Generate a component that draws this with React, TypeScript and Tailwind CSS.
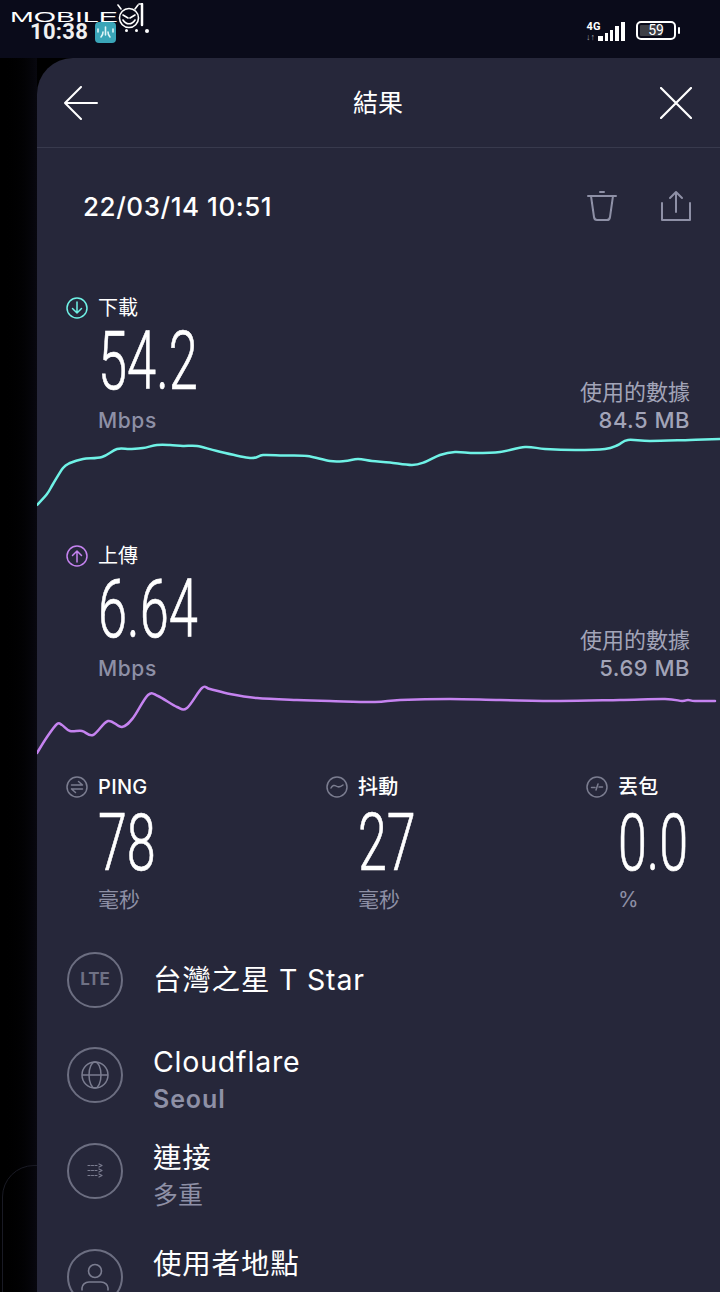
import { ReactNode } from "react";

const gotham = "font-['Inter','Noto_Sans_CJK_TC',sans-serif]";
const digits = "font-['Roboto',sans-serif]";

const downloadPoints = [
  [0, 68], [10, 57], [16, 47], [26, 31], [33, 26], [46, 22], [65, 20], [80, 12], [93, 12], [106, 11],
  [120, 8], [133, 8], [146, 9], [160, 9], [180, 14], [213, 21], [226, 18], [246, 18.5], [270, 19], [293, 24],
  [308, 24], [321, 22], [335, 24], [353, 25.5], [375, 28], [388, 25], [403, 18], [418, 15], [438, 16], [463, 15],
  [488, 10], [508, 12], [538, 13], [568, 12], [581, 8], [591, 3], [613, 4], [653, 3], [683, 2],
];

const uploadPoints = [
  [0, 67], [10, 51], [20, 38], [25, 39], [33, 45], [45, 45], [56, 49], [71, 35], [85, 41], [96, 32],
  [111, 9], [121, 10], [140, 21], [150, 22], [165, 2], [173, 3], [193, 8], [220, 12], [260, 14], [293, 15],
  [338, 16], [363, 14], [413, 13], [463, 14], [523, 15], [583, 14], [628, 13], [645, 15], [651, 14], [658, 15], [678, 15],
];

// 점들을 부드러운 곡선으로 연결
function smoothPath(pts: number[][]) {
  let d = `M${pts[0][0]} ${pts[0][1]}`;
  for (let i = 0; i < pts.length - 1; i++) {
    const p0 = pts[i - 1] ?? pts[i];
    const p1 = pts[i];
    const p2 = pts[i + 1];
    const p3 = pts[i + 2] ?? p2;
    const c1x = p1[0] + (p2[0] - p0[0]) / 6;
    const c1y = p1[1] + (p2[1] - p0[1]) / 6;
    const c2x = p2[0] - (p3[0] - p1[0]) / 6;
    const c2y = p2[1] - (p3[1] - p1[1]) / 6;
    d += ` C${c1x.toFixed(1)} ${c1y.toFixed(1)} ${c2x.toFixed(1)} ${c2y.toFixed(1)} ${p2[0]} ${p2[1]}`;
  }
  return d;
}

function CircleIcon({ color, children }: { color: string; children: ReactNode }) {
  return (
    <svg width="22" height="22" viewBox="0 0 22 22" fill="none" stroke={color} strokeWidth="1.5" strokeLinecap="round" strokeLinejoin="round">
      <circle cx="11" cy="11" r="10" />
      {children}
    </svg>
  );
}

function SpeedBlock({
  icon,
  label,
  value,
  used,
  points,
  color,
  viewBox,
}: {
  icon: ReactNode;
  label: string;
  value: string;
  used: string;
  points: number[][];
  color: string;
  viewBox: string;
}) {
  return (
    <section className="flex flex-col">
      <div className="flex items-center gap-[10px] pl-[29px] h-[24px]">
        {icon}
        <span className={`${gotham} text-[20px] leading-[24px] text-white`}>{label}</span>
      </div>
      <div className="flex items-end justify-between pl-[61px] pr-[30px]">
        <div className="flex flex-col">
          <div className={`${digits} h-[82px] text-[82px] leading-[82px] font-light [-webkit-text-stroke:0.7px_white] text-white origin-left scale-x-[0.64]`}>{value}</div>
          <div className={`${gotham} mt-[6px] text-[21px] leading-[26px] tracking-[0.6px] font-medium text-[#8e90a6]`}>Mbps</div>
        </div>
        <div className={`${gotham} flex flex-col items-end text-[22px] leading-[28px] text-[#a2a4b8]`}>
          <span>使用的數據</span>
          <span className="font-medium tracking-[0.5px]">{used}</span>
        </div>
      </div>
      <svg className="block mt-[3px]" width="683" height="72" viewBox={viewBox} fill="none">
        <path d={smoothPath(points)} stroke={color} strokeWidth="2.5" strokeLinejoin="round" strokeLinecap="round" />
      </svg>
    </section>
  );
}

function Stat({ icon, label, value, unit }: { icon: ReactNode; label: string; value: string; unit: string }) {
  return (
    <div className="flex flex-col">
      <div className="flex items-center gap-[10px] h-[24px]">
        {icon}
        <span className={`${gotham} text-[20px] leading-[24px] tracking-[0.3px] font-medium text-white`}>{label}</span>
      </div>
      <div className={`${digits} ml-[32px] mt-[5px] h-[78px] text-[80px] leading-[78px] font-light [-webkit-text-stroke:0.7px_white] text-white origin-left scale-x-[0.65]`}>{value}</div>
      <div className={`${gotham} ml-[32px] mt-[4px] text-[21px] leading-[28px] text-[#8e90a6]`}>{unit}</div>
    </div>
  );
}

function InfoRow({
  icon,
  title,
  sub,
  subClass = "font-semibold tracking-[0.9px]",
  className = "",
}: {
  icon: ReactNode;
  title: string;
  sub?: string;
  subClass?: string;
  className?: string;
}) {
  return (
    <div className={`flex items-center gap-[30px] h-[95.5px] shrink-0 ${className}`}>
      <div className="flex items-center justify-center w-[56px] h-[56px] rounded-full border-2 border-[#6c6e81] shrink-0">{icon}</div>
      <div className={`flex flex-col ${sub !== undefined ? "pt-[12px]" : ""}`}>
        <span className={`${gotham} text-[28.5px] leading-[36px] tracking-[0.8px] text-white`}>{title}</span>
        {sub !== undefined && <span className={`${gotham} h-[38px] text-[25px] leading-[38px] text-[#8e90a6] ${subClass}`}>{sub}</span>}
      </div>
    </div>
  );
}

function StatusBar() {
  return (
    <div className="relative flex items-center justify-between h-[58px] shrink-0 bg-[#0a0b1a] pl-[30px] pr-[40px]">
      <div className="flex items-center gap-[7px] mt-[6px]">
        <span className="font-['Roboto',sans-serif] text-[22px] leading-[26px] tracking-[0.3px] font-bold text-[#f0f0f0]">10:38</span>
        <div className="flex items-center justify-center w-[21px] h-[21px] rounded-[4px] bg-[#3aa5b8]">
          <svg width="17" height="13" viewBox="0 0 17 13" fill="none" stroke="#dff4f7" strokeWidth="1.6" strokeLinecap="round">
            <path d="M1 3v3M16 3v3M8.5 1v8M6 6c0 3-1 4-2 5M11 6c0 3 1 4 2 5" />
          </svg>
        </div>
        <div className="flex gap-[7px] ml-[2px] mt-[-2px]">
          <span className="w-[3px] h-[3px] rounded-full bg-white" />
          <span className="w-[3px] h-[3px] rounded-full bg-white" />
          <span className="w-[4px] h-[4px] rounded-full bg-white" />
        </div>
      </div>

      {/* 워터마크 */}
      <div className="absolute left-[10px] top-[3px] flex items-start">
        <span className="font-['Liberation_Sans',sans-serif] mt-[2px] text-[15px] leading-[24px] w-[107px] text-white origin-left scale-x-[1.9]">MOBILE</span>
        <svg width="28" height="30" viewBox="0 0 28 30" fill="none" stroke="#fff" strokeWidth="1.6" strokeLinecap="round">
          <circle cx="12" cy="15" r="9.5" />
          <path d="M4 6 1 2M18 6l3-4M6 12l5 3M18 12l-5 3M6 17c3 5 9 5 12 0" />
          <path d="M25 1v21" strokeWidth="2.5" />
          <path d="M22 1h3" />
        </svg>
      </div>

      <div className="flex items-center gap-[11px] mt-[3px]">
        <div className="flex items-end gap-[1px]">
          <div className="flex flex-col items-center mr-[-4px] mb-[-1px]">
            <span className="font-['Roboto',sans-serif] text-[11px] leading-[12px] font-bold text-white">4G</span>
            <span className="font-['Roboto',sans-serif] text-[9px] leading-[9px] mr-[6px] text-[#a0a0a6]">↓↑</span>
          </div>
          <div className="flex items-end gap-[2px] h-[19px]">
            <span className="w-[5px] h-[5px] bg-white" />
            <span className="w-[3px] h-[8px] bg-white" />
            <span className="w-[3px] h-[11px] bg-white" />
            <span className="w-[4px] h-[15px] bg-white" />
            <span className="w-[4px] h-[19px] bg-white" />
          </div>
        </div>
        <div className="flex items-center gap-[2px]">
          <div className="flex w-[40px] h-[19px] rounded-[5px] border-2 border-white p-[2px] relative">
            <div className="w-[22px] bg-[#3d3e46] rounded-[1px]" />
            <span className="absolute inset-0 flex items-center justify-center font-['Roboto',sans-serif] text-[14px] text-white">59</span>
          </div>
          <span className="w-[2px] h-[7px] bg-white rounded-[1px]" />
        </div>
      </div>
    </div>
  );
}

export default function App() {
  return (
    <div className="flex flex-col w-[720px] h-[1292px] overflow-hidden bg-black">
      <StatusBar />
      <div className="flex flex-1 min-h-0">
        <div className="relative w-[37px] shrink-0 bg-gradient-to-r from-black to-[#08080f]">
          <div className="absolute left-[2px] top-[1107px] w-[60px] h-[200px] rounded-tl-[32px] border border-[#191a24]" />
        </div>
        <main className="relative flex flex-col flex-1 min-w-0 overflow-hidden rounded-tl-[36px] bg-[#26273a]">
          <header className="flex items-center justify-between h-[90px] shrink-0 pl-[27px] pr-[28px] border-b border-[#383a4d]">
            <svg width="34" height="34" viewBox="0 0 34 34" fill="none" stroke="#fff" strokeWidth="2" strokeLinecap="round" strokeLinejoin="round">
              <path d="M33 17H1M17 1 1 17l16 16" />
            </svg>
            <span className={`${gotham} text-[25px] mt-[2px] mr-[2px] text-white`}>結果</span>
            <svg width="32" height="32" viewBox="0 0 32 32" fill="none" stroke="#fff" strokeWidth="2.2" strokeLinecap="round">
              <path d="M1 1l30 30M31 1 1 31" />
            </svg>
          </header>

          <div className="flex items-center justify-between h-[116px] shrink-0 pl-[46px] pr-[29px]">
            <span className={`${gotham} text-[26px] font-medium tracking-[0.55px] text-white`}>22/03/14 10:51</span>
            <div className="flex items-center gap-[44px] text-[#8e90a6]">
              <svg width="30" height="32" viewBox="0 0 30 32" fill="none" stroke="currentColor" strokeWidth="2" strokeLinecap="round" strokeLinejoin="round">
                <path d="M1 6h28M13 2h4M4 6l3 21c.2 1.5 1 3 3 3h10c2 0 2.800-1.500 3-3l3-21" />
              </svg>
              <svg width="30" height="32" viewBox="0 0 30 32" fill="none" stroke="currentColor" strokeWidth="2" strokeLinecap="round" strokeLinejoin="round">
                <path d="M15 22V2M9 8l6-6 6 6M1 13v17h28V13" />
              </svg>
            </div>
          </div>

          <div className="mt-[32px] flex flex-col gap-[35px]">
            <SpeedBlock
              icon={
                <CircleIcon color="#6ff2e6">
                  <path d="M11 5v11M6.500 11.500 11 16l4.500-4.500" />
                </CircleIcon>
              }
              label="下載"
              value="54.2"
              used="84.5 MB"
              points={downloadPoints}
              color="#6ff2e6"
              viewBox="0 0 683 72"
            />
            <SpeedBlock
              icon={
                <CircleIcon color="#c583f0">
                  <path d="M11 17V6M6.500 10.500 11 6l4.500 4.500" />
                </CircleIcon>
              }
              label="上傳"
              value="6.64"
              used="5.69 MB"
              points={uploadPoints}
              color="#c583f0"
              viewBox="0 -1 683 72"
            />
          </div>

          <div className="grid grid-cols-[260px_260px_1fr] pl-[29px] mt-[18px] shrink-0">
            <Stat
              icon={
                <CircleIcon color="#7b7d90">
                  <path d="M5.500 9h11M12.500 5.500l4 3.500M16.500 13h-11M9.500 16.500l-4-3.500" />
                </CircleIcon>
              }
              label="PING"
              value="78"
              unit="毫秒"
            />
            <Stat
              icon={
                <CircleIcon color="#7b7d90">
                  <path d="M5 12c1.500-3 3.500-3 5-2s3.500 2 7-1" />
                </CircleIcon>
              }
              label="抖動"
              value="27"
              unit="毫秒"
            />
            <Stat
              icon={
                <CircleIcon color="#7b7d90">
                  <path d="M5.500 11.500h3.500M13 11h3.500M10 14l2-6" />
                </CircleIcon>
              }
              label="丟包"
              value="0.0"
              unit="%"
            />
          </div>

          <div className="flex flex-col pl-[30px] mt-[18px]">
            <InfoRow icon={<span className={`${gotham} text-[17px] font-bold text-[#6f7184]`}>LTE</span>} title="台灣之星 T Star" />
            <InfoRow
              icon={
                <svg width="28" height="28" viewBox="0 0 28 28" fill="none" stroke="#7b7d90" strokeWidth="1.5">
                  <circle cx="14" cy="14" r="13" />
                  <ellipse cx="14" cy="14" rx="6" ry="13" />
                  <path d="M1 14h26" />
                </svg>
              }
              title="Cloudflare"
              sub="Seoul"
            />
            <InfoRow
              icon={
                <svg width="16" height="15" viewBox="0 0 16 15" fill="none" stroke="#7b7d90" strokeWidth="1.2" strokeLinecap="round" strokeLinejoin="round">
                  <path d="M1 2.500h10M1 7.500h10M1 12.500h10" strokeDasharray="2 1.500" />
                  <path d="M12 1l3 1.500-3 1.500M12 6l3 1.500-3 1.500M12 11l3 1.500-3 1.500" />
                </svg>
              }
              title="連接"
              sub="多重"
              subClass="font-normal"
            />
            <InfoRow
              icon={
                <svg width="28" height="28" viewBox="0 0 28 28" fill="none" stroke="#7b7d90" strokeWidth="1.6" strokeLinecap="round">
                  <circle cx="14" cy="8" r="6.500" />
                  <path d="M1 27v-2c0-3 3-6 7-6h12c4 0 7 3 7 6v2" />
                </svg>
              }
              title="使用者地點"
              sub=""
              className="mt-[10.5px]"
            />
          </div>
        </main>
      </div>
    </div>
  );
}
